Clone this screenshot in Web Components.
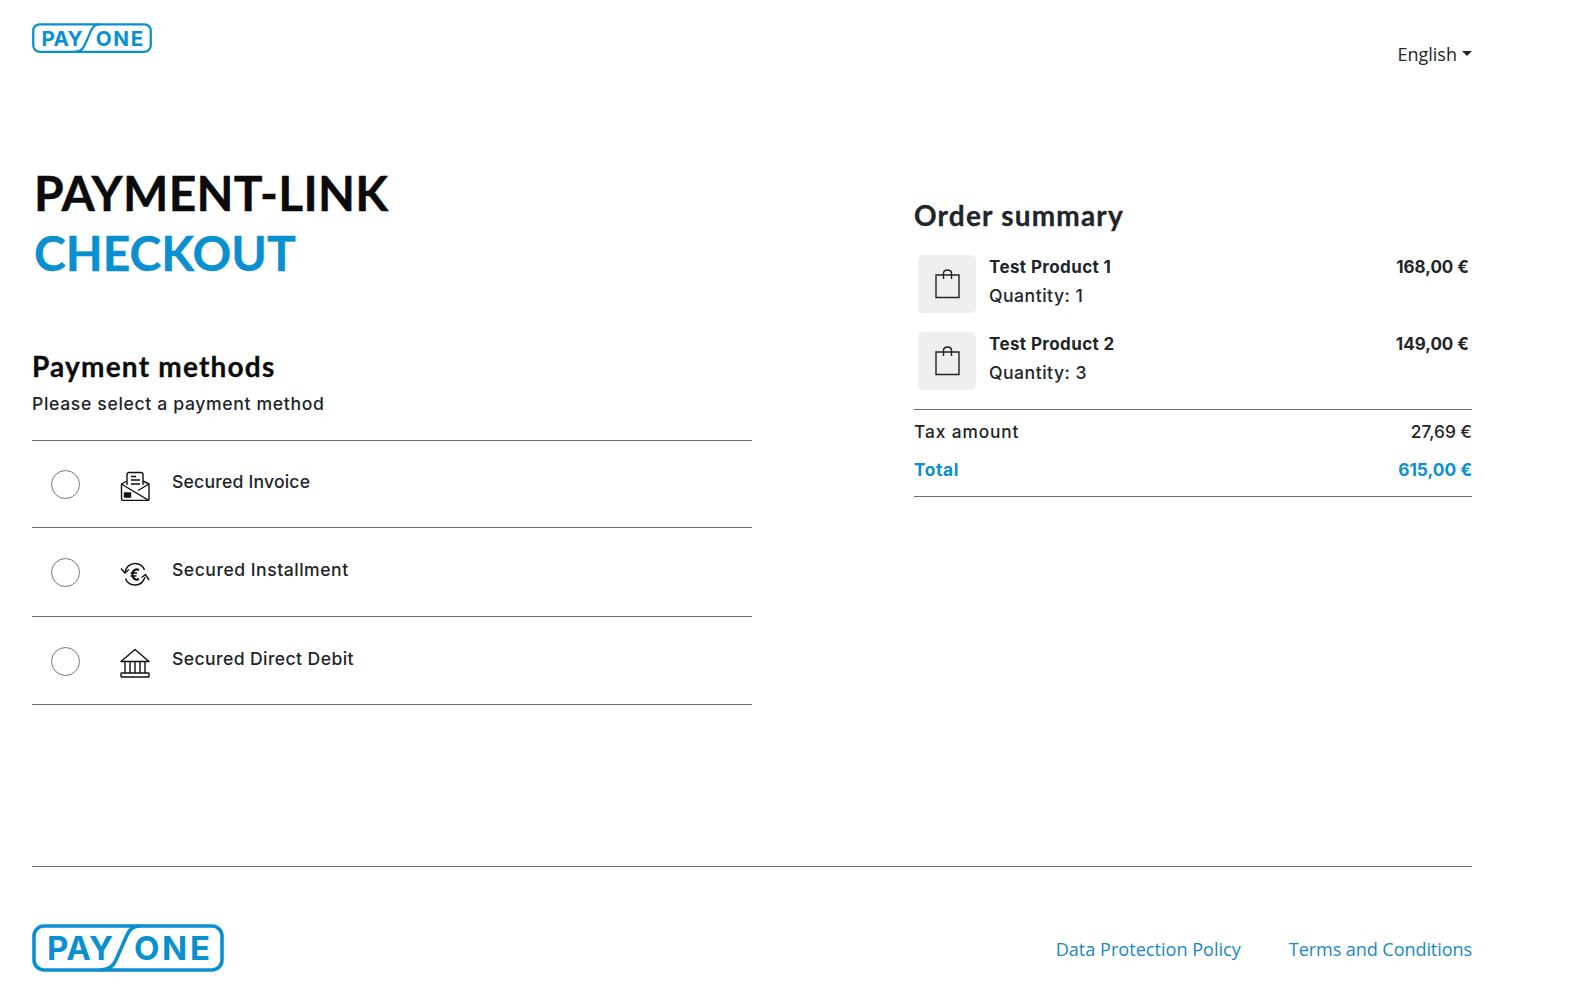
<!DOCTYPE html>
<html lang="en"><head><meta charset="utf-8"><title>Payment-Link Checkout</title>
<style>html,body{margin:0;background:#fff}body{font-family:"Inter","Liberation Sans",sans-serif;color:#212529}</style>
</head><body>
<pl-app></pl-app>
<template id="t-logo"><style>:host{display:block;line-height:0}svg{display:block;width:100%;height:auto}text{font-family:"Inter",sans-serif;font-weight:700;fill:#0a8fcf;font-size:33px}</style>
<svg viewBox="0 0 192 48" aria-label="PAYONE"><path d="M12 2H180a10 10 0 0 1 10 10V36a10 10 0 0 1-10 10H12a10 10 0 0 1-10-10V12A10 10 0 0 1 12 2Z" fill="none" stroke="#0a8fcf" stroke-width="3.6"/><path d="M108 2C101 2 98 5 95 11L84 36C81 43 76 46 68 46" fill="none" stroke="#0a8fcf" stroke-width="3.6"/><text x="15" y="36" textLength="66" lengthAdjust="spacing">PAY</text><text x="102" y="36" textLength="76" lengthAdjust="spacing">ONE</text></svg></template>
<template id="t-lang"><style>:host{display:inline-flex;align-items:center;font:18px/30px "Open Sans","Noto Sans",sans-serif;color:#212529}i{display:inline-block;margin-left:5px;border-top:5px solid #212529;border-left:5px solid transparent;border-right:5px solid transparent;margin-top:-2px}</style><span><slot></slot></span><i></i></template>
<template id="t-method"><style>:host{display:flex;align-items:flex-start;box-sizing:border-box;border-bottom:1px solid #6f6f6f;padding-left:19px}.r{width:27px;height:27px;border:1px solid #767676;border-radius:50%;margin-top:29px;flex:none;box-sizing:content-box}.i{width:30px;height:30px;margin:30px 22px 0 40px;flex:none}.t{font:500 17.6px/24px "Inter",sans-serif;margin-top:29px;color:#212529;letter-spacing:var(--ls,.5px)}</style><div class="r"></div><div class="i"><slot name="icon"></slot></div><div class="t"><slot></slot></div></template>
<template id="t-product"><style>:host{display:flex;align-items:flex-start;margin-bottom:19px;padding:0 3px 0 4px;color:#212529}.th{width:58px;height:58px;background:#efefef;border-radius:5px;display:flex;align-items:center;justify-content:center;flex:none}.b{flex:1;margin:-2px 0 0 13px;font:500 17px/28.500px "Inter",sans-serif}.n{font-weight:700;display:flex;justify-content:space-between}.nm{letter-spacing:.4px}.q{font-size:17.600px;letter-spacing:.5px}svg{margin-left:-1px}</style><div class="th"><svg width="26" height="30" viewBox="0 0 26 30" fill="none" stroke="#222" stroke-width="1.4"><path d="M2 6H25V28.500H2Z"/><path d="M9.500 10V4.500C9.500 2.200 11 1 13.500 1S17.500 2.200 17.500 4.500V10"/></svg></div><div class="b"><div class="n"><span class="nm"><slot name="name"></slot></span><span><slot name="price"></slot></span></div><div class="q"><slot name="qty"></slot></div></div></template>
<template id="t-app"><style>
:host{display:block;width:1572px;height:1002px;box-sizing:border-box;padding:23px 100px 0 32px;overflow:hidden}
header{display:flex;justify-content:space-between;align-items:flex-start;height:97px}
pl-logo.s{width:120px}
pl-lang{margin-top:16px}
main{display:flex;justify-content:space-between;height:746px}
.l{width:720px}.rc{width:558px;padding-top:77px}
h1{margin:43px 0 0 2px;font:700 48px/60px "Lato",sans-serif;letter-spacing:.3px;color:#0b0b0b;-webkit-text-stroke:.4px currentColor}
h1 b{display:block;color:#0a8fcf;font-weight:700;letter-spacing:0}
h2{margin:65px 0 0;font:700 28px/36px "Lato",sans-serif;color:#0b0b0b;letter-spacing:1.2px;-webkit-text-stroke:.3px currentColor}
p{margin:10px 0 26px;font:500 17.6px/20px "Inter",sans-serif;color:#212529;letter-spacing:.65px}
.list{border-top:1px solid #6f6f6f}
pl-method{height:88px}
pl-method.a{height:87px;--ls:.2px}
pl-method.b{height:89px;padding-top:1px}
pl-method.c{padding-top:1px;--ls:.4px}
h3{margin:0 0 22px;font:700 28px/36px "Lato",sans-serif;color:#212529;letter-spacing:1.2px;-webkit-text-stroke:.3px currentColor}
.sum{border-top:1px solid #6f6f6f;border-bottom:1px solid #6f6f6f;padding:3px 0 7px}
.row{display:flex;justify-content:space-between;font:500 17.300px/30px "Inter",sans-serif;height:38px;align-items:center}
.row>span:first-child{letter-spacing:.9px}
.row.t>span:first-child{letter-spacing:.6px}
.row.t{font-weight:700;color:#0a8fcf}
footer{border-top:1px solid #6f6f6f;display:flex;justify-content:space-between;align-items:flex-start;padding-top:57px}
pl-logo.b{width:192px}
nav{display:flex;gap:48px;margin-top:10px;font:18.100px/30px "Open Sans","Noto Sans",sans-serif}
a{color:#1b87c3;text-decoration:none}
a:last-child{letter-spacing:-.1px}
</style>
<header><pl-logo class="s"></pl-logo><pl-lang>English</pl-lang></header>
<main><section class="l"><h1>PAYMENT-LINK<b>CHECKOUT</b></h1><h2>Payment methods</h2><p>Please select a payment method</p>
<div class="list">
<pl-method class="a"><svg slot="icon" viewBox="0 0 30 30" width="30" height="30" fill="none" stroke="#111" stroke-width="1.400" stroke-linejoin="round"><path d="M7 14V3.500C7 2.300 8 1.500 9 1.500H21C22.200 1.500 23 2.300 23 3.500V14"/><path d="M7 10L1.500 13V28C1.500 29 2 29.500 3 29.500H27.500C28.500 29.500 29 29 29 28V13L23 10"/><path d="M1.500 13L8 17L29 29.500M29 13L18 19.500"/><path d="M11 9H20M11 13H20M11 5.500H16"/><rect x="4.500" y="22" width="6" height="4" fill="#111"/></svg>Secured Invoice</pl-method>
<pl-method class="b"><svg slot="icon" viewBox="0 0 30 30" width="30" height="30" fill="none" stroke="#111" stroke-width="1.400"><path d="M5 13C6 8 10 4.500 15 4.500C19.500 4.500 23 7 24.500 11"/><path d="M25 18C23.500 23 19.500 26 15 26C10.500 26 7 23.500 5.500 19.500"/><path d="M1 9.500L4.800 14L9 10.500"/><path d="M21.500 18.500L25.500 15.500L29 21"/><path d="M19 11C16 9.500 12.500 11 12.500 15.500C12.500 20 16 21.500 19 20" stroke-width="2.100"/><path d="M10.500 14H17M10.500 17H16.500" stroke-width="1.600"/></svg>Secured Installment</pl-method>
<pl-method class="c"><svg slot="icon" viewBox="0 0 30 30" width="30" height="30" fill="none" stroke="#111" stroke-width="1.400"><path d="M1 13.500L15 1.500L29 13.500Z" stroke-linejoin="round"/><path d="M5 14V25M10 14V25M15 14V25M20 14V25M25 14V25"/><rect x="1" y="25" width="28" height="4" rx=".6"/></svg>Secured Direct Debit</pl-method>
</div></section>
<aside class="rc"><h3>Order summary</h3>
<pl-product><span slot="name">Test Product 1</span><span slot="price">168,00 €</span><span slot="qty">Quantity: 1</span></pl-product>
<pl-product><span slot="name">Test Product 2</span><span slot="price">149,00 €</span><span slot="qty">Quantity: 3</span></pl-product>
<div class="sum"><div class="row"><span>Tax amount</span><span>27,69 €</span></div><div class="row t"><span>Total</span><span>615,00 €</span></div></div>
</aside></main>
<footer><pl-logo class="b"></pl-logo><nav><a href="#">Data Protection Policy</a><a href="#">Terms and Conditions</a></nav></footer>
</template>
<script>
function def(name,tpl){customElements.define(name,class extends HTMLElement{constructor(){super();this.attachShadow({mode:"open"}).appendChild(document.getElementById(tpl).content.cloneNode(true));}});}
def("pl-logo","t-logo");def("pl-lang","t-lang");def("pl-method","t-method");def("pl-product","t-product");def("pl-app","t-app");
</script>
</body></html>
